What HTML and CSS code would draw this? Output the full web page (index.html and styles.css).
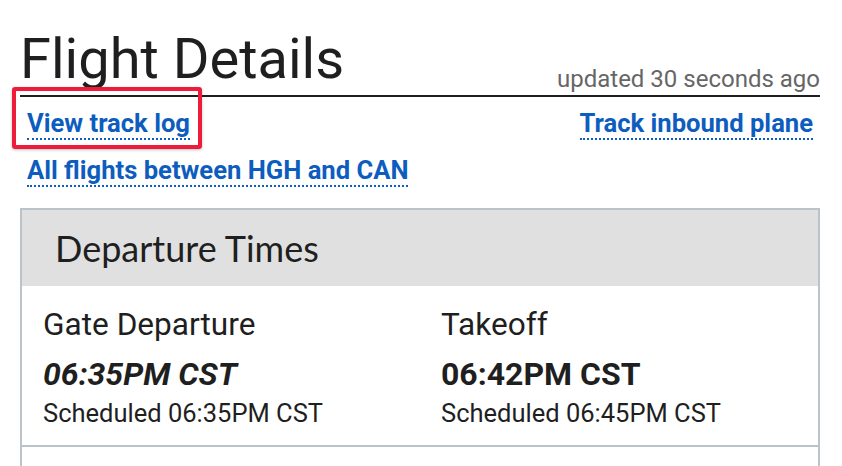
FILE: index.html
```html
<!DOCTYPE html>
<html>
<head>
<meta charset="utf-8">
<link rel="stylesheet" href="styles.css">
</head>
<body>
<div class="page">
  <div class="title-row">
    <h1 class="title">Flight Details</h1>
    <span class="updated">updated 30 seconds ago</span>
  </div>
  <div class="links">
    <div class="link-row">
      <a class="link highlighted" href="#">View track log</a>
      <a class="link" href="#">Track inbound plane</a>
    </div>
    <div class="link-row">
      <a class="link" href="#">All flights between HGH and CAN</a>
    </div>
  </div>
  <div class="card">
    <div class="card-head">Departure Times</div>
    <div class="card-body">
      <div class="col">
        <div class="label">Gate Departure</div>
        <div class="time italic">06:35PM CST</div>
        <div class="sched">Scheduled 06:35PM CST</div>
      </div>
      <div class="col">
        <div class="label">Takeoff</div>
        <div class="time">06:42PM CST</div>
        <div class="sched">Scheduled 06:45PM CST</div>
      </div>
    </div>
    <div class="card-next"></div>
  </div>
</div>
</body>
</html>
```

FILE: styles.css
```css
html, body {
  margin: 0;
  padding: 0;
  background: #fff;
  font-family: Roboto, "Liberation Sans", sans-serif;
  color: #1f1f1f;
}
.page {
  width: 800px;
  margin-left: 20px;
  padding-top: 27px;
}
.title-row {
  display: flex;
  justify-content: space-between;
  align-items: flex-end;
  border-bottom: 2px solid #1f1f1f;
  padding-bottom: 4px;
}
.title {
  margin: 0;
  font-weight: 400;
  font-size: 56px;
  line-height: 64px;
  padding-left: 0;
}
.updated {
  font-size: 24px;
  color: #666;
  line-height: 24px;
}
.links {
  display: flex;
  flex-direction: column;
  gap: 15px;
  padding: 11px 7px 0 7px;
}
.link-row {
  display: flex;
  justify-content: space-between;
}
.link {
  position: relative;
  color: #0d5dbf;
  font-weight: 700;
  font-size: 25.6px;
  line-height: 30px;
  height: 30px;
  text-decoration: none;
  border-bottom: 2px dotted #0d5dbf;
}
.highlighted::after {
  content: "";
  position: absolute;
  left: -15px;
  top: -21px;
  right: -12px;
  bottom: -11px;
  border: 4.5px solid #ef1b3a;
  border-radius: 3px;
  box-shadow: 0 1px 3px rgba(0,0,0,0.25);
}
.card {
  margin-top: 21px;
  border: 2px solid #b9c3cc;
  border-bottom: none;
}
.card-head {
  background: #e0e0e0;
  font-family: Lato, sans-serif;
  font-size: 36px;
  line-height: 76px;
  padding-left: 33px;
  color: #1f1f1f;
}
.card-body {
  display: grid;
  grid-template-columns: 398px 398px;
  padding: 21px 0 17px 21px;
  border-bottom: 2px solid #b9c3cc;
}
.label {
  font-size: 31.6px;
  line-height: 36px;
}
.time {
  font-size: 32px;
  font-weight: 700;
  line-height: 40px;
  margin-top: 11px;
}
.italic {
  font-style: italic;
}
.sched {
  font-size: 25.5px;
  line-height: 30px;
  margin-top: 4px;
}
.card-next {
  height: 30px;
}
```
